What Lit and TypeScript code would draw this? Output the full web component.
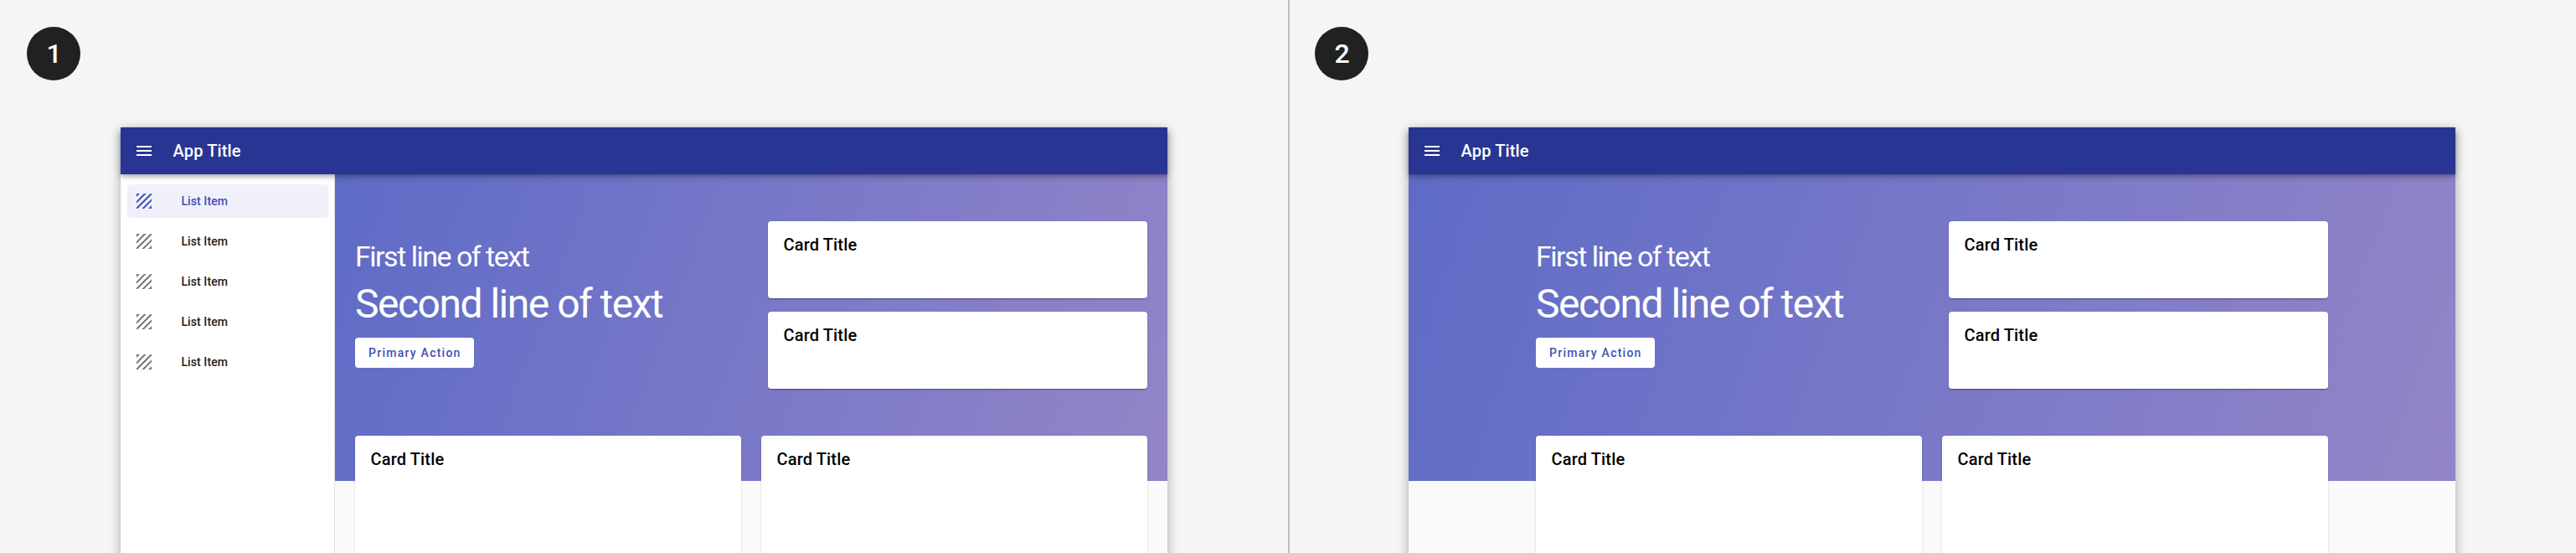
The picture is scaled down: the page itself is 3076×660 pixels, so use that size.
import { LitElement, html, css } from 'lit';
import { customElement, property } from 'lit/decorators.js';

const FONT = css`Roboto, "Noto Sans", sans-serif`;

@customElement('md-card')
class MdCard extends LitElement {
  static styles = css`
    :host {
      display: block;
      box-sizing: border-box;
      padding: 16px 18.5px;
      border-radius: 4px;
      background: #fff;
      box-shadow: 0 2px 1px -1px rgba(0, 0, 0, 0.2), 0 1px 1px rgba(0, 0, 0, 0.14), 0 1px 3px rgba(0, 0, 0, 0.12);
      font: 500 20px/24px ${FONT};
      letter-spacing: 0.15px;
      color: #000;
    }
  `;
  render() {
    return html`<slot></slot>`;
  }
}

@customElement('app-frame')
class AppFrame extends LitElement {
  @property({ type: Boolean, reflect: true }) drawer = false;

  static styles = css`
    :host {
      display: flex;
      flex-direction: column;
      width: 1250px;
      height: 700px;
      background: #fafafa;
      box-shadow: 0 5px 5px -3px rgba(0, 0, 0, 0.2), 0 8px 10px 1px rgba(0, 0, 0, 0.14), 0 3px 14px 2px rgba(0, 0, 0, 0.12);
      font-family: ${FONT};
    }
    .bar {
      display: flex;
      align-items: center;
      flex: none;
      gap: 22.5px;
      height: 56px;
      box-sizing: border-box;
      padding: 0 16px;
      background: #283593;
      color: #fff;
      font-size: 20px;
      font-weight: 500;
      letter-spacing: 0.15px;
      z-index: 1;
      box-shadow: 0 2px 4px -1px rgba(0, 0, 0, 0.2), 0 4px 5px rgba(0, 0, 0, 0.14), 0 1px 10px rgba(0, 0, 0, 0.12);
    }
    svg {
      width: 24px;
      height: 24px;
      fill: currentColor;
      display: block;
    }
    .body {
      display: flex;
      flex: 1;
      min-height: 0;
    }
    .drawer {
      box-sizing: border-box;
      width: 256px;
      padding: 12px 7px 0 8px;
      background: #fff;
      border-right: 1px solid #e0e0e0;
      display: flex;
      flex-direction: column;
      gap: 8px;
    }
    .item {
      display: flex;
      align-items: center;
      gap: 32.4px;
      height: 40px;
      flex: none;
      box-sizing: border-box;
      padding: 0 8px;
      border-radius: 4px;
      font-size: 14px;
      font-weight: 500;
      letter-spacing: 0.1px;
      color: #212121;
    }
    .item svg {
      color: #757575;
    }
    .item.active,
    .item.active svg {
      color: #3f51b5;
    }
    .item.active {
      background: #f0f0fa;
    }
    .main {
      flex: 1;
      min-width: 0;
    }
    .hero {
      height: 366px;
      box-sizing: border-box;
      padding-top: 56px;
      background: linear-gradient(110deg, #5e6bc6 0%, #7677c8 45%, #9385c7 100%);
    }
    .content {
      width: 946px;
      margin: 0 auto;
    }
    .top {
      display: grid;
      grid-template-columns: 1fr 453px;
    }
    .stack {
      display: grid;
      grid-template-rows: 92px 92px;
      gap: 16px;
    }
    .copy {
      display: flex;
      flex-direction: column;
      align-items: flex-start;
      color: #fff;
      padding-top: 22px;
    }
    .first {
      font-size: 34px;
      line-height: 40px;
      letter-spacing: -1.5px;
    }
    .second {
      margin-top: 9px;
      font-size: 48px;
      line-height: 56px;
      letter-spacing: -1.5px;
    }
    .action {
      margin-top: 12px;
      height: 36px;
      padding: 0 15px 0 16px;
      border: 0;
      border-radius: 4px;
      background: #fff;
      color: #3f51b5;
      font: 500 14px/36px ${FONT};
      letter-spacing: 1.25px;
    }
    .bottom {
      display: grid;
      grid-template-columns: 1fr 1fr;
      gap: 24px;
      margin-top: -54px;
    }
    .bottom md-card {
      height: 240px;
    }
  `;

  private item(active: boolean) {
    return html`<div class="item ${active ? 'active' : ''}">
      <svg viewBox="0 0 24 24">
        <path d="M19.59 3L3 19.59V21h1.41L21 4.41V3h-1.41zM11.88 3L3 11.88v2.83L14.71 3h-2.83zM3 3v4l4-4H3zm18 18v-4l-4 4h4zM9.29 21h2.83L21 12.12V9.29L9.29 21z" />
      </svg>
      <span>List Item</span>
    </div>`;
  }

  render() {
    return html`
      <header class="bar">
        <svg viewBox="0 0 24 24"><path d="M3 18h18v-2H3v2zm0-5h18v-2H3v2zm0-7v2h18V6H3z" /></svg>
        <span>App Title</span>
      </header>
      <div class="body">
        ${this.drawer
          ? html`<nav class="drawer">${[0, 1, 2, 3, 4].map((i) => this.item(i === 0))}</nav>`
          : ''}
        <main class="main">
          <section class="hero">
            <div class="content top">
              <div class="copy">
                <div class="first">First line of text</div>
                <div class="second">Second line of text</div>
                <button class="action">Primary Action</button>
              </div>
              <div class="stack">
                <md-card>Card Title</md-card>
                <md-card>Card Title</md-card>
              </div>
            </div>
          </section>
          <section class="content bottom">
            <md-card>Card Title</md-card>
            <md-card>Card Title</md-card>
          </section>
        </main>
      </div>
    `;
  }
}

@customElement('app-root')
class AppRoot extends LitElement {
  static styles = css`
    :host {
      display: grid;
      grid-template-columns: 1538px 1538px;
      height: 660px;
      overflow: hidden;
      background: #f5f5f5;
    }
    .panel {
      box-sizing: border-box;
      padding: 32px;
      height: 660px;
      overflow: hidden;
    }
    .panel + .panel {
      border-left: 2px solid #bdbdbd;
      padding-left: 30px;
    }
    .badge {
      box-sizing: border-box;
      width: 64px;
      height: 64px;
      padding-left: 1px;
      border-radius: 50%;
      background: #212121;
      color: #fff;
      font: 500 32px/64px ${FONT};
      text-align: center;
    }
    app-frame {
      margin: 56px 0 0 112px;
    }
  `;
  render() {
    return html`
      <section class="panel"><div class="badge">1</div><app-frame drawer></app-frame></section>
      <section class="panel"><div class="badge">2</div><app-frame></app-frame></section>
    `;
  }
}
